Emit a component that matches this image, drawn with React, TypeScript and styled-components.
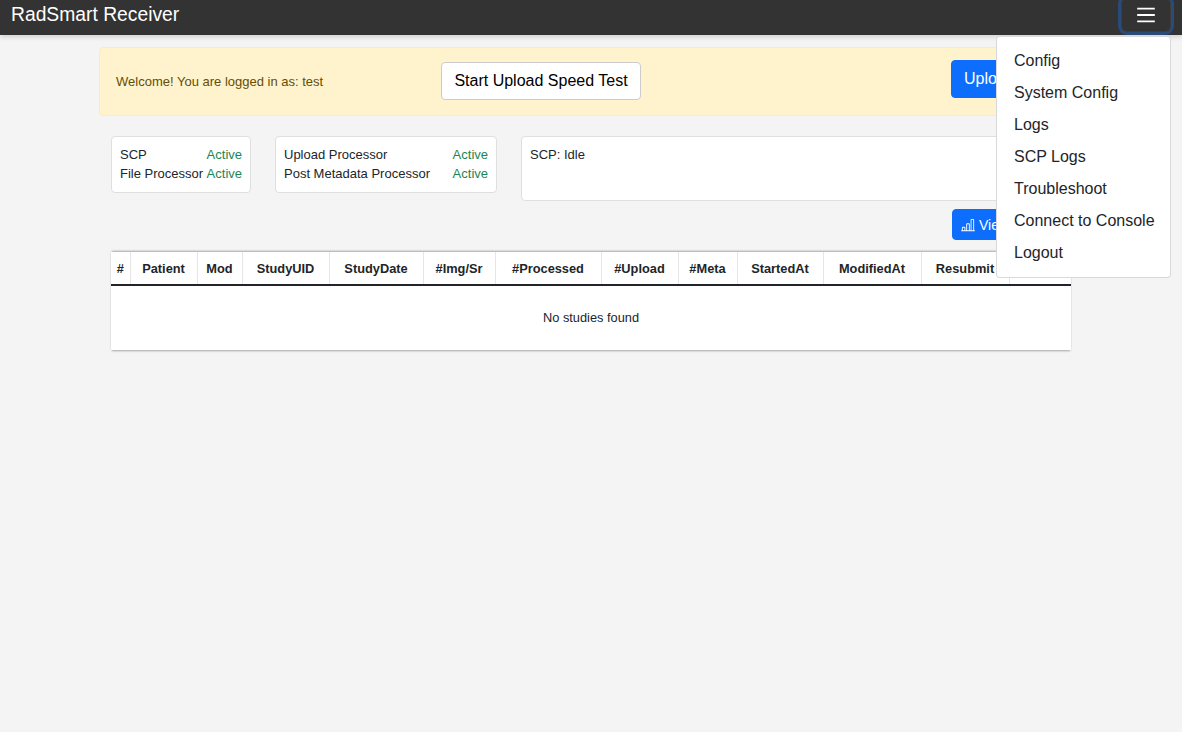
import { createGlobalStyle, styled } from "styled-components";
import { BsBarChartLine } from "react-icons/bs";

const GlobalStyle = createGlobalStyle`
  html, body {
    margin: 0;
    padding: 0;
    background-color: #f4f4f4;
    color: #212529;
    font-family: "Liberation Sans", Arial, sans-serif;
  }
`;

const Page = styled.div`
  position: relative;
  min-height: 732px;
  overflow: hidden;
`;

const Navbar = styled.nav`
  height: 35px;
  box-sizing: border-box;
  padding: 0 11px;
  background-color: #333;
  display: flex;
  justify-content: space-between;
  align-items: flex-start;
  box-shadow: 0 2px 5px rgba(0, 0, 0, 0.15);
  overflow: hidden;
`;

const Brand = styled.div`
  color: #fff;
  font-size: 19.3px;
  line-height: 29px;
`;

const Toggler = styled.button`
  width: 50px;
  height: 34px;
  margin: -2px 0 0;
  padding: 0;
  background: transparent;
  border: 1px solid rgba(255, 255, 255, 0.05);
  border-radius: 6px;
  box-shadow: 0 0 0 3px #2a4a77;
  display: flex;
  align-items: center;
  justify-content: center;
`;

const Menu = styled.div`
  position: absolute;
  top: 36px;
  left: 996px;
  width: 175px;
  height: 242px;
  box-sizing: border-box;
  padding: 8px 0 0;
  background-color: #fff;
  border: 1px solid rgba(0, 0, 0, 0.15);
  border-radius: 4px;
`;

const MenuItem = styled.div`
  padding: 0 16px 0 17px;
  font-size: 16px;
  line-height: 32px;
  white-space: nowrap;
`;

const Main = styled.main`
  width: 984px;
  margin: 0 auto;
  padding-top: 12px;
`;

const Alert = styled.div`
  height: 69px;
  box-sizing: border-box;
  padding: 0 16px;
  background-color: #fff3cd;
  border: 1px solid #ffecb5;
  border-radius: 4px;
  color: #664d03;
  font-size: 13px;
  display: grid;
  grid-template-columns: 325px 510px 1fr;
  align-items: center;
`;

const Button = styled.button`
  justify-self: start;
  height: 38px;
  padding: 0 12px;
  box-sizing: border-box;
  font-family: inherit;
  font-size: 16px;
  white-space: nowrap;
  border-radius: 4px;
  color: #fff;
  background-color: #0d6efd;
  border: 1px solid #0d6efd;
`;

const SpeedTestButton = styled(Button)`
  width: 200px;
  margin-bottom: 2px;
  color: #000;
  background-color: #fff;
  border-color: #ccc;
`;

const UploadButton = styled(Button)`
  margin-bottom: 6px;
`;

const Content = styled.div`
  padding: 0 12px;
`;

const StatusRow = styled.div`
  margin-top: 20px;
  display: flex;
  align-items: flex-start;
  gap: 24px;
  font-size: 13px;
`;

const Card = styled.div`
  box-sizing: border-box;
  padding: 8px;
  background-color: #fff;
  border: 1px solid #dfdfdf;
  border-radius: 4px;
`;

const ServiceCard = styled(Card)<{ $width: number }>`
  width: ${(p) => p.$width}px;
  height: 57px;
  display: grid;
  grid-template-columns: 1fr auto;
  grid-auto-rows: 19px;
  line-height: 19px;
  white-space: nowrap;
`;

const Active = styled.span`
  color: #198754;
`;

const ScpCard = styled(Card)`
  flex: 1;
  height: 65px;
  line-height: 19px;
`;

const ActionRow = styled.div`
  margin-top: 8px;
  display: flex;
  justify-content: flex-end;
`;

const ViewButton = styled(Button)`
  justify-self: auto;
  width: 119px;
  height: 31px;
  padding: 0 8px;
  font-size: 14px;
  display: flex;
  align-items: center;
  gap: 4px;
`;

const Table = styled.table`
  width: 960px;
  margin-top: 12px;
  background-color: #fff;
  border-collapse: collapse;
  table-layout: fixed;
  font-size: 12.8px;
  box-shadow: 0 2px 2px -1px rgba(0, 0, 0, 0.3), 0 -2px 2px -1px rgba(0, 0, 0, 0.3), 0 0 2px rgba(0, 0, 0, 0.08);
`;

const Th = styled.th`
  height: 33px;
  box-sizing: border-box;
  padding: 0;
  font-weight: 700;
  text-align: center;
  white-space: nowrap;
  border-right: 1px solid #e6e6e6;
  border-bottom: 2px solid #212529;
  &:last-child {
    border-right: 0;
  }
`;

const EmptyCell = styled.td`
  height: 65px;
  box-sizing: border-box;
  padding: 0 0 2px;
  text-align: center;
`;

const columns: [string, number][] = [
  ["#", 19],
  ["Patient", 67],
  ["Mod", 45],
  ["StudyUID", 87],
  ["StudyDate", 94],
  ["#Img/Sr", 72],
  ["#Processed", 106],
  ["#Upload", 77],
  ["#Meta", 59],
  ["StartedAt", 86],
  ["ModifiedAt", 98],
  ["Resubmit", 88],
  ["", 62],
];

const menuItems = ["Config", "System Config", "Logs", "SCP Logs", "Troubleshoot", "Connect to Console", "Logout"];

export default function App() {
  return (
    <Page>
      <GlobalStyle />
      <Navbar>
        <Brand>RadSmart Receiver</Brand>
        <Toggler aria-label="Toggle navigation">
          <svg width="24" height="24" viewBox="0 0 30 30">
            <path stroke="#fff" strokeWidth="2.2" d="M4 7h22M4 15h22M4 23h22" />
          </svg>
        </Toggler>
      </Navbar>

      <Main>
        <Alert>
          <span>Welcome! You are logged in as: test</span>
          <SpeedTestButton>Start Upload Speed Test</SpeedTestButton>
          <UploadButton>Upload Now</UploadButton>
        </Alert>

        <Content>
          <StatusRow>
            <ServiceCard $width={140}>
              <span>SCP</span>
              <Active>Active</Active>
              <span>File Processor</span>
              <Active>Active</Active>
            </ServiceCard>
            <ServiceCard $width={222}>
              <span>Upload Processor</span>
              <Active>Active</Active>
              <span>Post Metadata Processor</span>
              <Active>Active</Active>
            </ServiceCard>
            <ScpCard>SCP: Idle</ScpCard>
          </StatusRow>

          <ActionRow>
            <ViewButton>
              <BsBarChartLine size={14} />
              View Stats
            </ViewButton>
          </ActionRow>

          <Table>
            <colgroup>
              {columns.map(([, width], i) => (
                <col key={i} style={{ width }} />
              ))}
            </colgroup>
            <thead>
              <tr>
                {columns.map(([name], i) => (
                  <Th key={i}>{name}</Th>
                ))}
              </tr>
            </thead>
            <tbody>
              <tr>
                <EmptyCell colSpan={columns.length}>No studies found</EmptyCell>
              </tr>
            </tbody>
          </Table>
        </Content>
      </Main>

      <Menu>
        {menuItems.map((item) => (
          <MenuItem key={item}>{item}</MenuItem>
        ))}
      </Menu>
    </Page>
  );
}
